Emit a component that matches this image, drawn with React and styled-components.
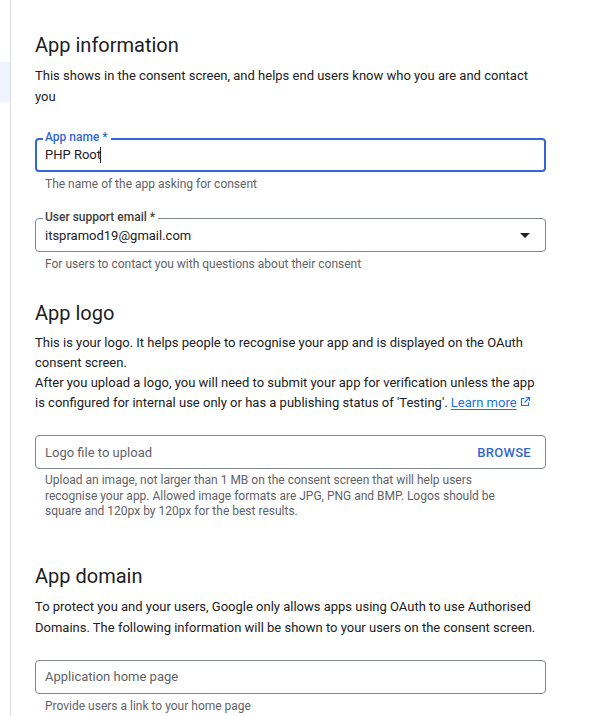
import React from 'react'
import styled, { createGlobalStyle } from 'styled-components'

const Global = createGlobalStyle`
    body {
        margin:0;
        background:#fff;
        font-family: Roboto, "Liberation Sans", Arial, sans-serif;
        color:#202124;
    }
`

const Page = styled.div`
    display:flex;
    min-height:716px;
`

const Rail = styled.div`
    width:10px;
    flex-shrink:0;
    border-right:1px solid #dadce0;
    padding-top:62px;
`

const RailActive = styled.div`
    height:40px;
    background:#eef3fd;
`

const Content = styled.div`
    width:511px;
    padding:33px 0 0 24px;
`

const Section = styled.section`
    margin-bottom:${p => p.$gap || 0}px;
`

const Heading = styled.h2`
    margin:0;
    font-size:20px;
    line-height:24px;
    font-weight:400;
    color:#202124;
`

const Text = styled.p`
    margin:8px 0 0;
    font-size:13px;
    line-height:${p => p.$lh || 21}px;
    color:#202124;
`

const Link = styled.a`
    color:#1a73e8;
    text-decoration:underline;
    text-underline-offset:2px;
    white-space:nowrap;
`

const LinkIcon = styled.svg`
    margin-left:2px;
    vertical-align:-1px;
`

const Field = styled.div`
    position:relative;
    margin-top:${p => p.$top || 0}px;
`

const Box = styled.div`
    height:34px;
    box-sizing:border-box;
    border:${p => (p.$focused ? '2px solid #3367d6' : '1px solid #80868b')};
    border-radius:4px;
    display:flex;
    align-items:center;
    padding:0 ${p => (p.$focused ? 13 : 14)}px 0 ${p => (p.$focused ? 8 : 9)}px;
    font-size:13px;
`

const Label = styled.span`
    position:absolute;
    top:-8px;
    left:8px;
    padding:0 3px 0 2px;
    background:#fff;
    font-size:12px;
    line-height:14px;
    font-weight:500;
    color:${p => (p.$focused ? '#3367d6' : '#3c4043')};
`

const Value = styled.span`
    flex:1;
    color:${p => (p.$placeholder ? '#5f6368' : '#202124')};
`

const Caret = styled.span`
    display:inline-block;
    width:1px;
    height:16px;
    background:#202124;
    vertical-align:middle;
    margin-left:-1px;
`

const Arrow = styled.span`
    width:0;
    height:0;
    border-left:5px solid transparent;
    border-right:5px solid transparent;
    border-top:5px solid #202124;
    margin-right:1px;
`

const Browse = styled.span`
    color:#3367d6;
    font-weight:500;
    font-size:13px;
    letter-spacing:0.3px;
`

const Hint = styled.div`
    padding:0 20px 0 10px;
    margin-top:4px;
    font-size:12px;
    line-height:${p => p.$lh || 16}px;
    color:#5f6368;
`

function ExternalIcon() {
    return (
        <LinkIcon width="12" height="12" viewBox="0 0 24 24" fill="none" stroke="#1a73e8" strokeWidth="2.2">
            <path d="M19 13v6H5V5h6" />
            <path d="M14 3h7v7" />
            <path d="M21 3L11 13" />
        </LinkIcon>
    )
}

export default function App() {
    return (
        <Page>
            <Global />
            <Rail>
                <RailActive />
            </Rail>
            <Content>
                <Section $gap={29}>
                    <Heading>App information</Heading>
                    <Text>This shows in the consent screen, and helps end users know who you are and contact you</Text>
                    <Field $top={31}>
                        <Label $focused>App name *</Label>
                        <Box $focused>
                            <Value>PHP Root<Caret /></Value>
                        </Box>
                    </Field>
                    <Hint>The name of the app asking for consent</Hint>
                    <Field $top={26}>
                        <Label>User support email *</Label>
                        <Box>
                            <Value>itspramod19@gmail.com</Value>
                            <Arrow />
                        </Box>
                    </Field>
                    <Hint>For users to contact you with questions about their consent</Hint>
                </Section>

                <Section $gap={44}>
                    <Heading>App logo</Heading>
                    <Text $lh={20}>
                        This is your logo. It helps people to recognise your app and is displayed on the OAuth consent screen.
                        <br />
                        After you upload a logo, you will need to submit your app for verification unless the app is configured for internal use only or has a publishing status of 'Testing'.{' '}
                        <Link>Learn more<ExternalIcon /></Link>
                    </Text>
                    <Field $top={22}>
                        <Box>
                            <Value $placeholder>Logo file to upload</Value>
                            <Browse>BROWSE</Browse>
                        </Box>
                    </Field>
                    <Hint $lh={15.5}>
                        Upload an image, not larger than 1 MB on the consent screen that will help users recognise your app. Allowed image formats are JPG, PNG and BMP. Logos should be square and 120px by 120px for the best results.
                    </Hint>
                </Section>

                <Section>
                    <Heading>App domain</Heading>
                    <Text>To protect you and your users, Google only allows apps using OAuth to use Authorised Domains. The following information will be shown to your users on the consent screen.</Text>
                    <Field $top={22}>
                        <Box>
                            <Value $placeholder>Application home page</Value>
                        </Box>
                    </Field>
                    <Hint>Provide users a link to your home page</Hint>
                </Section>
            </Content>
        </Page>
    )
}
